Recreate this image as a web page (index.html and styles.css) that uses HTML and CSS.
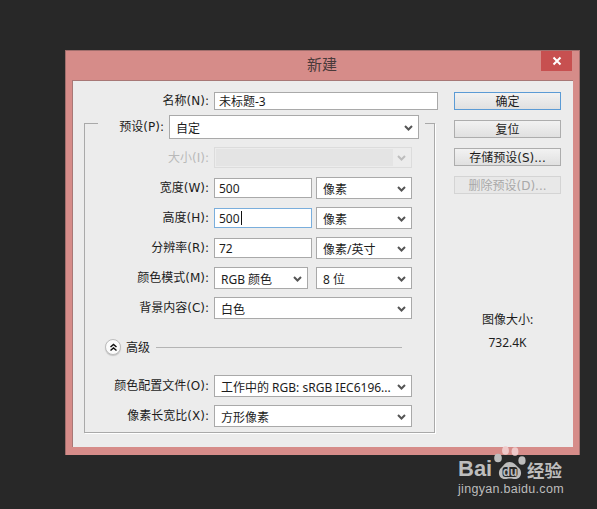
FILE: index.html
```html
<!DOCTYPE html>
<html lang="zh-CN">
<head>
  <meta charset="UTF-8" />
  <title>新建</title>
  <link rel="stylesheet" href="styles.css">
</head>
<body>
  <div class="window">
    <div class="titlebar">
      <span class="title">新建</span>
      <div class="close">
        <svg width="10" height="10" viewBox="0 0 10 10"><path d="M1.5 1.5 L8.5 8.5 M8.5 1.5 L1.5 8.5" stroke="#fff" stroke-width="2" fill="none"/></svg>
      </div>
    </div>

    <div class="dialog">
      <div class="form">
        <div class="row name-row">
          <label class="label">名称(N):</label>
          <div class="field w-name">未标题-3</div>
        </div>

        <div class="group">
          <div class="row preset-row">
            <label class="label">预设(P):</label>
            <div class="select w-preset"><span>自定</span><svg class="chev" width="9" height="6" viewBox="0 0 9 6"><path d="M1 1 L4.500 4.500 L8 1" /></svg></div>
          </div>

          <div class="row size-row disabled">
            <label class="label">大小(I):</label>
            <div class="select w-wide"><span class="size-fill"></span><svg class="chev" width="9" height="6" viewBox="0 0 9 6"><path d="M1 1 L4.500 4.500 L8 1" /></svg></div>
          </div>

          <div class="row">
            <label class="label">宽度(W):</label>
            <div class="field w-num">500</div>
            <div class="select w-unit"><span>像素</span><svg class="chev" width="9" height="6" viewBox="0 0 9 6"><path d="M1 1 L4.500 4.500 L8 1" /></svg></div>
          </div>
          <div class="row">
            <label class="label">高度(H):</label>
            <div class="field w-num focused">500<span class="caret"></span></div>
            <div class="select w-unit"><span>像素</span><svg class="chev" width="9" height="6" viewBox="0 0 9 6"><path d="M1 1 L4.500 4.500 L8 1" /></svg></div>
          </div>
          <div class="row">
            <label class="label">分辨率(R):</label>
            <div class="field w-num">72</div>
            <div class="select w-unit"><span>像素/英寸</span><svg class="chev" width="9" height="6" viewBox="0 0 9 6"><path d="M1 1 L4.500 4.500 L8 1" /></svg></div>
          </div>
          <div class="row">
            <label class="label">颜色模式(M):</label>
            <div class="select w-mode"><span>RGB 颜色</span><svg class="chev" width="9" height="6" viewBox="0 0 9 6"><path d="M1 1 L4.500 4.500 L8 1" /></svg></div>
            <div class="select w-unit"><span>8 位</span><svg class="chev" width="9" height="6" viewBox="0 0 9 6"><path d="M1 1 L4.500 4.500 L8 1" /></svg></div>
          </div>
          <div class="row">
            <label class="label">背景内容(C):</label>
            <div class="select w-wide"><span>白色</span><svg class="chev" width="9" height="6" viewBox="0 0 9 6"><path d="M1 1 L4.500 4.500 L8 1" /></svg></div>
          </div>

          <div class="advanced">
            <div class="round">
              <svg width="9" height="9" viewBox="0 0 9 9"><path d="M1.500 4 L4.500 1.500 L7.500 4 M1.500 7.500 L4.500 5 L7.500 7.500" stroke="#111" stroke-width="1.500" fill="none"/></svg>
            </div>
            <span class="advanced-text">高级</span>
            <div class="rule"></div>
          </div>

          <div class="row profile-row">
            <label class="label">颜色配置文件(O):</label>
            <div class="select w-wide"><span>工作中的 RGB: sRGB IEC6196...</span><svg class="chev" width="9" height="6" viewBox="0 0 9 6"><path d="M1 1 L4.500 4.500 L8 1" /></svg></div>
          </div>
          <div class="row">
            <label class="label">像素长宽比(X):</label>
            <div class="select w-wide"><span>方形像素</span><svg class="chev" width="9" height="6" viewBox="0 0 9 6"><path d="M1 1 L4.500 4.500 L8 1" /></svg></div>
          </div>
        </div>
      </div>

      <div class="side">
        <button class="btn default">确定</button>
        <button class="btn">复位</button>
        <button class="btn">存储预设(S)...</button>
        <button class="btn off">删除预设(D)...</button>
        <div class="info">
          <p>图像大小:</p>
          <p>732.4K</p>
        </div>
      </div>
    </div>
  </div>

  <!-- watermark sits over the dialog's bottom edge -->
  <div class="watermark">
    <div class="wm-top">
      <span class="wm-bai">Bai</span>
      <svg class="wm-paw" width="33" height="34" viewBox="0 0 33 34">
        <ellipse class="toe-out" cx="4" cy="12" rx="3.800" ry="4.300" />
        <ellipse class="toe-in" cx="11.500" cy="4.500" rx="3.400" ry="4.300" />
        <ellipse class="toe-in" cx="21" cy="5.500" rx="3.400" ry="4.300" />
        <ellipse class="toe-out" cx="28" cy="14.500" rx="3.600" ry="4.300" />
        <path class="toe-out" d="M15.500 16 C11 16 10 19.500 7 22 C3 26 5 33 11 33 C13 33 14 32.500 16 32.500 C18 32.500 19 33 21 33 C27 33 29 26 25 22 C22 19.500 20 16 15.500 16 Z" />
        <rect class="paw-inner" x="8.500" y="21" width="15" height="10" rx="3" />
        <text x="16" y="29.800" class="wm-du">du</text>
      </svg>
      <span class="wm-cn">经验</span>
    </div>
    <div class="wm-url">jingyan.baidu.com</div>
  </div>
</body>
</html>
```

FILE: styles.css
```css
body {
  margin: 0;
  height: 509px;
  overflow: hidden;
  background: #282828;
  position: relative;
  font-family: "Noto Sans", "Noto Sans CJK SC", sans-serif;
  font-size: 12px;
  color: #1c1c1c;
}
.window {
  box-sizing: border-box;
  width: 515px;
  height: 405px;
  margin: 50px 0 0 65px;
  background: #d68c89;
  border: 1px solid #a06e6c;
  border-bottom: 0;
  padding: 0 7px 8px 6px;
  display: flex;
  flex-direction: column;
}
.titlebar {
  height: 29px;
  flex: none;
  display: flex;
  justify-content: center;
  align-items: center;
  position: relative;
  padding-bottom: 4px;
  box-sizing: border-box;
}
.title {
  font-size: 15px;
  color: #4a3a3a;
}
.close {
  position: absolute;
  top: 0;
  right: 0;
  width: 31px;
  height: 20px;
  background: #c75050;
  display: flex;
  align-items: center;
  justify-content: center;
}
.dialog {
  flex: 1;
  display: flex;
  background: #ececec;
  border-top: 1px solid #a87876;
  border-left: 1px solid #a87876;
  padding-top: 11px;
  width: 500px;
}
.form {
  width: 381px;
  flex: none;
}
.row {
  display: flex;
  align-items: center;
  height: 22px;
  margin-top: 8px;
}
.label {
  width: 124px;
  margin-right: 5px;
  font-family: "DejaVu Sans", "Noto Sans CJK SC", sans-serif;
  text-align: right;
  white-space: nowrap;
  flex: none;
  line-height: 16px;
}
.name-row {
  margin-top: 0;
  height: 18px;
}
.name-row .label {
  width: 136px;
}
.field, .select {
  box-sizing: border-box;
  background: #fff;
  border: 1px solid #a9a9a9;
  white-space: nowrap;
  display: flex;
  align-items: center;
  flex: none;
}
.field {
  height: 20px;
  padding-left: 4px;
}
.select {
  height: 22px;
  padding: 1px 5px 0 6px;
  justify-content: space-between;
  margin-right: 4px;
}
.field.w-name { width: 224px; height: 18px; }
.w-num { width: 98px; margin-right: 4px; }
.w-unit { width: 96px; }
.w-wide { width: 198px; }
.w-mode { width: 94px; margin-right: 8px; }
.w-preset { width: 250px; height: 24px; margin-right: 6px; }
.focused { border-color: #7aaedc; }
.caret {
  width: 1px;
  height: 14px;
  background: #111;
  margin-left: 1px;
}
.chev {
  flex: none;
  fill: none;
  stroke: #555;
  stroke-width: 2;
}
.group {
  box-sizing: border-box;
  width: 351px;
  height: 310px;
  margin: 13px 0 0 11px;
  border: 1px solid #a9a9a9;
  box-shadow: 1px 1px 0 #fff;
}
.preset-row {
  height: 24px;
  width: 327px;
  margin: -9px 0 0 13px;
  background: #ececec;
}
.preset-row .label {
  width: 66px;
}
.size-row {
  margin-top: 8px;
  height: 21px;
  margin-bottom: 9px;
}
.size-row + .row { margin-top: 0; }
.disabled .label { color: #b9b9b9; }
.disabled .select {
  height: 21px;
  background: #ececec;
  border-color: #dcdcdc;
  padding: 1px 5px 1px 1px;
  align-items: center;
}
.disabled .chev { stroke: #bdbdbd; }
.size-fill {
  display: block;
  width: 177px;
  height: 100%;
  background: #e4e4e4;
}
.advanced {
  display: flex;
  align-items: center;
  height: 16px;
  margin: 20px 0 0 20px;
}
.round {
  box-sizing: border-box;
  width: 16px;
  height: 16px;
  border-radius: 50%;
  background: #fbfbfb;
  border: 1px solid #bdbdbd;
  box-shadow: 0 1px 1px #c4c4c4;
  display: flex;
  align-items: center;
  justify-content: center;
}
.advanced-text {
  margin: 0 6px 0 5px;
}
.rule {
  width: 246px;
  height: 1px;
  background: #b4b4b4;
}
.profile-row { margin-top: 20px; }
.side {
  display: flex;
  flex-direction: column;
  width: 107px;
  flex: none;
}
.btn {
  box-sizing: border-box;
  height: 18px;
  margin: 0 0 10px 0;
  padding: 1px 0 0 0;
  background: linear-gradient(#f2f2f2, #e0e0e0);
  border: 1px solid #adadad;
  font-family: "DejaVu Sans", "Noto Sans CJK SC", sans-serif;
  font-size: 12px;
  color: #1c1c1c;
  line-height: 14px;
}
.btn.default { border-color: #5b9bd5; }
.btn.off {
  color: #a9a9a9;
  border-color: #d4d4d4;
  background: #e8e8e8;
}
.info {
  margin-top: 108px;
  text-align: center;
}
.info p {
  margin: 0 0 7px 0;
  line-height: 16px;
}
.watermark {
  position: absolute;
  left: 458px;
  top: 446px;
  width: 110px;
  color: #bdbdbd;
}
.wm-top {
  display: flex;
  align-items: flex-end;
  height: 34px;
}
.wm-bai {
  font-family: "Liberation Sans", sans-serif;
  font-weight: bold;
  font-size: 22px;
  line-height: 22px;
  flex: none;
  width: 35px;
}
.wm-paw {
  flex: none;
  margin-left: 1px;
}
.toe-out { fill: #bdbdbd; }
.toe-in { fill: #efc9c9; }
.paw-inner { fill: #282828; }
.wm-du {
  font-family: "Liberation Sans", sans-serif;
  font-weight: bold;
  font-size: 12px;
  text-anchor: middle;
  fill: #bdbdbd;
}
.wm-cn {
  font-family: "Noto Sans CJK SC", sans-serif;
  font-weight: bold;
  font-size: 17.500px;
  line-height: 20px;
  flex: none;
  white-space: nowrap;
}
.wm-url {
  font-family: "Liberation Sans", sans-serif;
  font-size: 12.500px;
  line-height: 16px;
  margin-top: 1px;
  letter-spacing: 0.300px;
  white-space: nowrap;
}
```
